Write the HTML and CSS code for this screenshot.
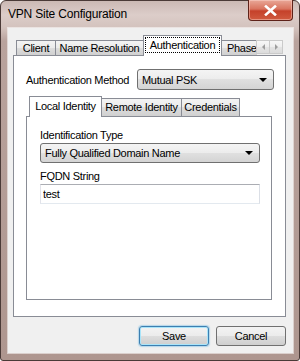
FILE: index.html
```html
<!DOCTYPE html>
<html lang="en">
<head>
  <meta charset="UTF-8" />
  <title>VPN Site Configuration</title>
  <link rel="stylesheet" href="styles.css">
</head>
<body>
  <div class="window">
    <div class="titlebar">
      <span class="title">VPN Site Configuration</span>
      <button class="close">
        <svg width="13" height="11" viewBox="0 0 13 11"><path d="M2 1.5 L11 9.5 M11 1.5 L2 9.5" stroke="#fff" stroke-width="2.6" stroke-linecap="square"/></svg>
      </button>
    </div>

    <div class="client">
      <div class="tabstrip">
        <div class="tablist">
          <div class="tab tab-client">Client</div>
          <div class="tab tab-names">Name Resolution</div>
          <div class="tab tab-auth selected"><span class="focus">Authentication</span></div>
          <div class="tab tab-phase">Phase</div>
        </div>
        <div class="spin">
          <span class="spin-btn spin-left"></span>
          <span class="spin-btn spin-right"></span>
        </div>
      </div>

      <div class="page">
        <div class="field-row">
          <span class="row-label">Authentication Method</span>
          <div class="combo">Mutual PSK<i class="arrow"></i></div>
        </div>

        <div class="subtabs">
          <div class="tabstrip">
            <div class="tablist">
              <div class="tab tab-local selected">Local Identity</div>
              <div class="tab tab-remote">Remote Identity</div>
              <div class="tab tab-cred">Credentials</div>
            </div>
          </div>
          <div class="subpage">
            <div class="field-label">Identification Type</div>
            <div class="combo combo-small">Fully Qualified Domain Name<i class="arrow"></i></div>
            <div class="field-label field-gap">FQDN String</div>
            <input type="text" class="text-input" value="test" />
          </div>
        </div>
      </div>

      <div class="buttons">
        <button class="btn btn-default">Save</button>
        <button class="btn">Cancel</button>
      </div>
    </div>
  </div>
</body>
</html>
```

FILE: styles.css
```css
body {
  margin: 0;
  font-family: "Liberation Sans", Arial, sans-serif;
  font-size: 11px;
  letter-spacing: -0.3px;
  color: #000;
}
.window {
  width: 300px;
  height: 361px;
  box-sizing: border-box;
  border: 1px solid #4a3a37;
  border-radius: 6px 6px 3px 3px;
  background: linear-gradient(to bottom, #cbb9b4 0, #dccdc9 14px, #d3c2bd 27px, #b9a39d 40px, #ae968f 100%);
  padding: 0 6px 7px 7px;
  display: flex;
  flex-direction: column;
}
.titlebar {
  height: 27px;
  display: flex;
  justify-content: space-between;
  align-items: flex-start;
  flex: none;
}
.title {
  font-size: 12px;
  letter-spacing: -0.2px;
  line-height: 15px;
  margin-top: 6px;
}
.close {
  margin-top: -1px;
  width: 45px;
  height: 21px;
  padding: 0;
  border: 1px solid #5e2219;
  border-top: none;
  border-radius: 0 0 4px 4px;
  background: linear-gradient(to bottom, #e9a898 0, #d9745f 45%, #c5412a 55%, #d05a3f 100%);
  box-shadow: inset 0 0 0 1px rgba(255, 220, 210, 0.45);
  display: flex;
  align-items: center;
  justify-content: center;
}
.client {
  flex: 1;
  background: #f0f0f0;
  padding: 7px 7px 7px 5px;
  display: flex;
  flex-direction: column;
  box-shadow: 0 0 0 1px rgba(255, 255, 255, 0.55);
}
.tabstrip {
  display: flex;
  height: 21px;
  margin-bottom: -1px;
  position: relative;
  z-index: 1;
  flex: none;
}
.tablist {
  flex: 1;
  display: flex;
  overflow: hidden;
  padding-left: 3px;
}
.tab {
  flex: none;
  box-sizing: border-box;
  height: 15px;
  margin-top: 5px;
  margin-right: -1px;
  border: 1px solid #898c95;
  border-bottom: none;
  background: linear-gradient(to bottom, #f3f3f3, #ebebeb 50%, #dddddd 50%, #d0d0d0);
  text-align: center;
  line-height: 14px;
  white-space: nowrap;
}
.tab.selected {
  height: 21px;
  margin-top: 0;
  padding: 1px 1px 0 1px;
  background: #fff;
  position: relative;
  z-index: 1;
}
.focus {
  display: block;
  border: 1px dotted #000;
  line-height: 14px;
}
.tab-client { width: 40px; }
.tab-names { width: 89px; }
.tab-auth { width: 79px; }
.tab-phase { width: 40px; text-align: left; padding-left: 5px; }
.spin {
  display: flex;
  margin: 5px 3px 0 0;
  height: 14px;
}
.spin-btn {
  width: 14px;
  height: 14px;
  box-sizing: border-box;
  margin-left: -1px;
  border: 1px solid #cacaca;
  background: linear-gradient(to bottom, #f7f7f7, #eeeeee 50%, #e4e4e4 50%, #dcdcdc);
  display: flex;
  align-items: center;
  justify-content: center;
}
.spin-btn::before {
  content: "";
  border-top: 3px solid transparent;
  border-bottom: 3px solid transparent;
}
.spin-left::before { border-right: 3px solid #9d9d9d; }
.spin-right::before { border-left: 3px solid #9d9d9d; }
.page {
  flex: 1;
  background: #fff;
  border: 1px solid #898c95;
  padding: 13px 11px 16px 12px;
  display: flex;
  flex-direction: column;
}
.field-row {
  display: flex;
  align-items: center;
}
.row-label {
  width: 111px;
  flex: none;
}
.combo {
  flex: 1;
  height: 21px;
  box-sizing: border-box;
  border: 1px solid #707070;
  border-radius: 3px;
  background: linear-gradient(to bottom, #f4f4f4, #ececec 50%, #e0e0e0 50%, #d4d4d4);
  padding: 0 6px 0 4px;
  display: flex;
  align-items: center;
  justify-content: space-between;
}
.combo-small {
  flex: none;
  height: 20px;
}
.arrow {
  border-left: 4px solid transparent;
  border-right: 4px solid transparent;
  border-top: 4px solid #000;
}
.subtabs {
  margin-top: 6px;
  margin-right: 2px;
  flex: 1;
  display: flex;
  flex-direction: column;
}
.subtabs .tab {
  height: 18px;
  margin-top: 2px;
  line-height: 17px;
}
.subtabs .tab.selected {
  height: 21px;
  margin-top: 0;
  padding: 1px 0 0 0;
  line-height: 17px;
}
.tab-local { width: 73px; }
.tab-remote { width: 81px; }
.tab-cred { width: 59px; }
.subpage {
  flex: 1;
  background: #fff;
  border: 1px solid #898c95;
  padding: 11px 11px 0 13px;
}
.field-label {
  line-height: 14px;
  margin-bottom: 1px;
}
.field-gap {
  margin-top: 6px;
}
.text-input {
  display: block;
  width: 100%;
  height: 20px;
  box-sizing: border-box;
  margin: 0;
  border: 1px solid;
  border-color: #abadb3 #dbdfe6 #e3e9ef #e2e3ea;
  padding: 0 2px;
  font: inherit;
  letter-spacing: inherit;
  color: #000;
  outline: none;
}
.buttons {
  display: flex;
  justify-content: flex-end;
  gap: 7px;
  margin-top: 9px;
  flex: none;
}
.btn {
  width: 70px;
  height: 20px;
  box-sizing: border-box;
  padding: 0;
  border: 1px solid #707070;
  border-radius: 3px;
  background: linear-gradient(to bottom, #f3f3f3, #ebebeb 50%, #dddddd 50%, #cfcfcf);
  font: inherit;
  letter-spacing: inherit;
  color: #000;
}
.btn-default {
  border-color: #3c7fb1;
  box-shadow: inset 0 0 0 1px #a9e4f9, 0 0 1px 1px rgba(120, 190, 230, 0.5);
}
```
